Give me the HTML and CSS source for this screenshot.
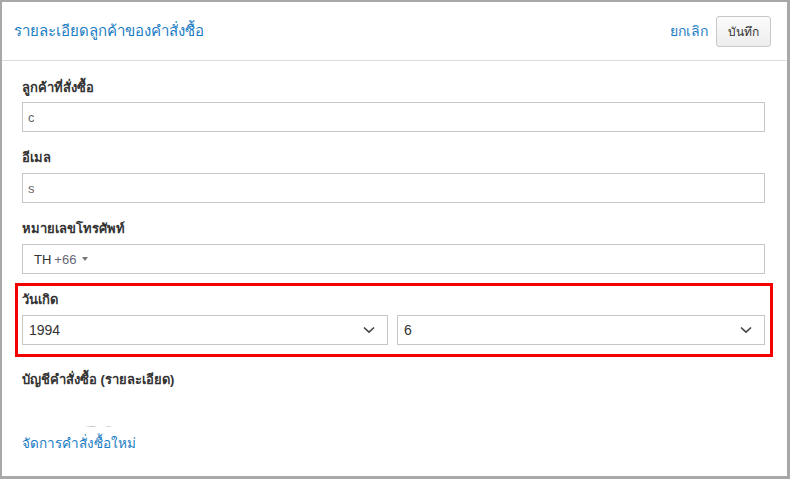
FILE: index.html
```html
<!DOCTYPE html>
<html lang="th">
<head>
<meta charset="utf-8">
<link rel="stylesheet" href="styles.css">
</head>
<body>
<div class="window">
  <header class="header">
    <h1 class="title">รายละเอียดลูกค้าของคำสั่งซื้อ</h1>
    <div class="actions">
      <a class="cancel" href="#">ยกเลิก</a>
      <button class="save" type="button">บันทึก</button>
    </div>
  </header>
  <div class="body">
    <div class="field">
      <div class="label">ลูกค้าที่สั่งซื้อ</div>
      <div class="input"><span class="val">c</span></div>
    </div>
    <div class="field">
      <div class="label">อีเมล</div>
      <div class="input"><span class="val">s</span></div>
    </div>
    <div class="field">
      <div class="label">หมายเลขโทรศัพท์</div>
      <div class="input phone"><span class="cc">TH</span><span class="code">+66</span><span class="caret"></span></div>
    </div>
    <div class="highlight">
      <div class="label">วันเกิด</div>
      <div class="selects">
        <div class="select"><span>1994</span>
          <svg class="chev" width="12" height="8" viewBox="0 0 12 8"><path d="M1 1.5 L6 6.2 L11 1.5" fill="none" stroke="#444" stroke-width="1.6"/></svg>
        </div>
        <div class="select"><span>6</span>
          <svg class="chev" width="12" height="8" viewBox="0 0 12 8"><path d="M1 1.5 L6 6.2 L11 1.5" fill="none" stroke="#444" stroke-width="1.6"/></svg>
        </div>
      </div>
    </div>
    <div class="label orders">บัญชีคำสั่งซื้อ (รายละเอียด)</div>
    <div class="mark"></div>
    <a class="newlink" href="#">จัดการคำสั่งซื้อใหม่</a>
  </div>
</div>
</body>
</html>
```

FILE: styles.css
```css
* { box-sizing: border-box; }
html, body { margin: 0; padding: 0; }
body {
  background: #a8a8a8;
  width: 790px;
  height: 479px;
  overflow: hidden;
  font-family: "Liberation Sans", Arial, sans-serif;
  color: #333;
}
.window {
  margin: 2px 3px 0 2px;
  height: 474px;
  background: #fff;
  display: flex;
  flex-direction: column;
}
.header {
  height: 59px;
  border-bottom: 1px solid #dcdcdc;
  display: flex;
  align-items: center;
  justify-content: space-between;
  padding: 0 16px 0 12px;
  flex-shrink: 0;
}
.title {
  margin: 0;
  font-size: 15px;
  font-weight: normal;
  color: #1a7cc2;
}
.actions { display: flex; align-items: center; gap: 8px; }
.cancel {
  color: #1a7cc2;
  text-decoration: none;
  font-size: 14px;
}
.save {
  width: 55px;
  height: 31px;
  border: 1px solid #c8c8c8;
  border-radius: 3px;
  background: linear-gradient(#fbfbfb, #ededed);
  font-family: inherit;
  font-size: 12px;
  color: #333;
  padding: 0;
}
.body {
  padding: 17px 22px 0 20px;
  display: flex;
  flex-direction: column;
}
.field { margin-bottom: 16px; }
.label {
  font-size: 13px;
  font-weight: bold;
  line-height: 20px;
  height: 20px;
  color: #333;
  margin-bottom: 4px;
}
.field + .field .label { margin-bottom: 5px; }
.input {
  height: 30px;
  border: 1px solid #c6c6c6;
  display: flex;
  align-items: center;
  padding: 0 5px;
  font-size: 13px;
}
.val { color: #666; font-size: 13px; width: 6px; overflow: hidden; }
.phone { padding-left: 11px; }
.cc { color: #333; font-size: 13px; }
.code { color: #667; font-size: 13px; margin-left: 3px; }
.caret {
  width: 0; height: 0;
  border-left: 3px solid transparent;
  border-right: 3px solid transparent;
  border-top: 4px solid #777;
  margin-left: 6px;
}
.highlight {
  border: 3px solid #f40000;
  margin: -7px -8px 0 -7px;
  padding: 4px 5px 9px 4px;
}
.highlight .label { margin-bottom: 5px; }
.selects {
  display: flex;
  gap: 9px;
}
.select {
  flex: 1;
  height: 30px;
  border: 1px solid #c6c6c6;
  display: flex;
  align-items: center;
  justify-content: space-between;
  padding: 0 12px 0 6px;
  font-size: 14px;
  color: #333;
}
.select:first-child { flex: 0 0 366px; }
.orders { margin-top: 13px; }
.mark {
  width: 30px;
  height: 1px;
  margin: 32px 0 0 62px;
  background: linear-gradient(90deg, transparent, #bbb 30%, transparent 45%, transparent 70%, #ccc 80%, transparent);
}
.newlink {
  margin-top: 7px;
  color: #1a7cc2;
  text-decoration: none;
  font-size: 13.5px;
  line-height: 20px;
  align-self: flex-start;
}
```
